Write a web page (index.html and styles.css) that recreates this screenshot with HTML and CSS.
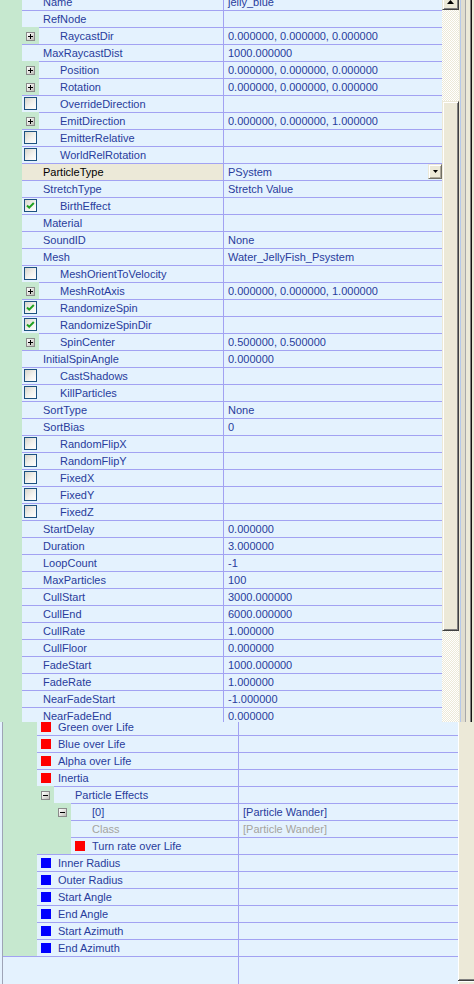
FILE: index.html
```html
<!DOCTYPE html>
<html>
<head>
<meta charset="utf-8">
<link rel="stylesheet" href="styles.css">
</head>
<body>
<div class="top">
  <div class="tlist">
    <div class="trows">
      <div class="row"><div class="gut"></div><div class="cnt"><div class="lab">Name</div><div class="val">jelly_blue</div></div></div>
      <div class="row"><div class="gut"></div><div class="cnt"><div class="lab">RefNode</div><div class="val"></div></div></div>
      <div class="row"><div class="gut gx"><span class="pm plus"></span></div><div class="cnt"><div class="lab nar">RaycastDir</div><div class="val">0.000000, 0.000000, 0.000000</div></div></div>
      <div class="row"><div class="gut"></div><div class="cnt"><div class="lab">MaxRaycastDist</div><div class="val">1000.000000</div></div></div>
      <div class="row"><div class="gut gx"><span class="pm plus"></span></div><div class="cnt"><div class="lab nar">Position</div><div class="val">0.000000, 0.000000, 0.000000</div></div></div>
      <div class="row"><div class="gut gx"><span class="pm plus"></span></div><div class="cnt"><div class="lab nar">Rotation</div><div class="val">0.000000, 0.000000, 0.000000</div></div></div>
      <div class="row"><div class="gut"></div><div class="cnt"><div class="lab cb"><span class="cbx"></span>OverrideDirection</div><div class="val"></div></div></div>
      <div class="row"><div class="gut gx"><span class="pm plus"></span></div><div class="cnt"><div class="lab nar">EmitDirection</div><div class="val">0.000000, 0.000000, 1.000000</div></div></div>
      <div class="row"><div class="gut"></div><div class="cnt"><div class="lab cb"><span class="cbx"></span>EmitterRelative</div><div class="val"></div></div></div>
      <div class="row"><div class="gut"></div><div class="cnt"><div class="lab cb"><span class="cbx"></span>WorldRelRotation</div><div class="val"></div></div></div>
      <div class="row sel"><div class="gut"></div><div class="cnt"><div class="lab">ParticleType</div><div class="val">PSystem<span class="dd"><svg width="5" height="3" viewBox="0 0 5 3"><path d="M0 0h5L2.5 3z" fill="#000"/></svg></span></div></div></div>
      <div class="row"><div class="gut"></div><div class="cnt"><div class="lab">StretchType</div><div class="val">Stretch Value</div></div></div>
      <div class="row"><div class="gut"></div><div class="cnt"><div class="lab cb"><span class="cbx"><svg width="11" height="11" viewBox="0 0 11 11"><path d="M2 5.5l2.2 2.2L8.8 3" fill="none" stroke="#21a121" stroke-width="2"/></svg></span>BirthEffect</div><div class="val"></div></div></div>
      <div class="row"><div class="gut"></div><div class="cnt"><div class="lab">Material</div><div class="val"></div></div></div>
      <div class="row"><div class="gut"></div><div class="cnt"><div class="lab">SoundID</div><div class="val">None</div></div></div>
      <div class="row"><div class="gut"></div><div class="cnt"><div class="lab">Mesh</div><div class="val">Water_JellyFish_Psystem</div></div></div>
      <div class="row"><div class="gut"></div><div class="cnt"><div class="lab cb"><span class="cbx"></span>MeshOrientToVelocity</div><div class="val"></div></div></div>
      <div class="row"><div class="gut gx"><span class="pm plus"></span></div><div class="cnt"><div class="lab nar">MeshRotAxis</div><div class="val">0.000000, 0.000000, 1.000000</div></div></div>
      <div class="row"><div class="gut"></div><div class="cnt"><div class="lab cb"><span class="cbx"><svg width="11" height="11" viewBox="0 0 11 11"><path d="M2 5.5l2.2 2.2L8.8 3" fill="none" stroke="#21a121" stroke-width="2"/></svg></span>RandomizeSpin</div><div class="val"></div></div></div>
      <div class="row"><div class="gut"></div><div class="cnt"><div class="lab cb"><span class="cbx"><svg width="11" height="11" viewBox="0 0 11 11"><path d="M2 5.5l2.2 2.2L8.8 3" fill="none" stroke="#21a121" stroke-width="2"/></svg></span>RandomizeSpinDir</div><div class="val"></div></div></div>
      <div class="row"><div class="gut gx"><span class="pm plus"></span></div><div class="cnt"><div class="lab nar">SpinCenter</div><div class="val">0.500000, 0.500000</div></div></div>
      <div class="row"><div class="gut"></div><div class="cnt"><div class="lab">InitialSpinAngle</div><div class="val">0.000000</div></div></div>
      <div class="row"><div class="gut"></div><div class="cnt"><div class="lab cb"><span class="cbx"></span>CastShadows</div><div class="val"></div></div></div>
      <div class="row"><div class="gut"></div><div class="cnt"><div class="lab cb"><span class="cbx"></span>KillParticles</div><div class="val"></div></div></div>
      <div class="row"><div class="gut"></div><div class="cnt"><div class="lab">SortType</div><div class="val">None</div></div></div>
      <div class="row"><div class="gut"></div><div class="cnt"><div class="lab">SortBias</div><div class="val">0</div></div></div>
      <div class="row"><div class="gut"></div><div class="cnt"><div class="lab cb"><span class="cbx"></span>RandomFlipX</div><div class="val"></div></div></div>
      <div class="row"><div class="gut"></div><div class="cnt"><div class="lab cb"><span class="cbx"></span>RandomFlipY</div><div class="val"></div></div></div>
      <div class="row"><div class="gut"></div><div class="cnt"><div class="lab cb"><span class="cbx"></span>FixedX</div><div class="val"></div></div></div>
      <div class="row"><div class="gut"></div><div class="cnt"><div class="lab cb"><span class="cbx"></span>FixedY</div><div class="val"></div></div></div>
      <div class="row"><div class="gut"></div><div class="cnt"><div class="lab cb"><span class="cbx"></span>FixedZ</div><div class="val"></div></div></div>
      <div class="row"><div class="gut"></div><div class="cnt"><div class="lab">StartDelay</div><div class="val">0.000000</div></div></div>
      <div class="row"><div class="gut"></div><div class="cnt"><div class="lab">Duration</div><div class="val">3.000000</div></div></div>
      <div class="row"><div class="gut"></div><div class="cnt"><div class="lab">LoopCount</div><div class="val">-1</div></div></div>
      <div class="row"><div class="gut"></div><div class="cnt"><div class="lab">MaxParticles</div><div class="val">100</div></div></div>
      <div class="row"><div class="gut"></div><div class="cnt"><div class="lab">CullStart</div><div class="val">3000.000000</div></div></div>
      <div class="row"><div class="gut"></div><div class="cnt"><div class="lab">CullEnd</div><div class="val">6000.000000</div></div></div>
      <div class="row"><div class="gut"></div><div class="cnt"><div class="lab">CullRate</div><div class="val">1.000000</div></div></div>
      <div class="row"><div class="gut"></div><div class="cnt"><div class="lab">CullFloor</div><div class="val">0.000000</div></div></div>
      <div class="row"><div class="gut"></div><div class="cnt"><div class="lab">FadeStart</div><div class="val">1000.000000</div></div></div>
      <div class="row"><div class="gut"></div><div class="cnt"><div class="lab">FadeRate</div><div class="val">1.000000</div></div></div>
      <div class="row"><div class="gut"></div><div class="cnt"><div class="lab">NearFadeStart</div><div class="val">-1.000000</div></div></div>
      <div class="row"><div class="gut"></div><div class="cnt"><div class="lab">NearFadeEnd</div><div class="val">0.000000</div></div></div>
    </div>
  </div>
  <div class="tscroll">
    <div class="sbtn"><svg width="7" height="4" viewBox="0 0 7 4"><path d="M3.5 0L7 4H0z" fill="#000"/></svg></div>
    <div class="track t1"></div>
    <div class="thumb"></div>
    <div class="track t2"></div>
  </div>
  <div class="frame"></div>
</div>
<div class="bottom">
  <div class="bedge"></div>
  <div class="blist">
    <div class="brows">
      <div class="row"><div class="bgut l1"></div><div class="cnt"><div class="lab"><span class="sq red"></span>Green over Life</div><div class="val"></div></div></div>
      <div class="row"><div class="bgut l1"></div><div class="cnt"><div class="lab"><span class="sq red"></span>Blue over Life</div><div class="val"></div></div></div>
      <div class="row"><div class="bgut l1"></div><div class="cnt"><div class="lab"><span class="sq red"></span>Alpha over Life</div><div class="val"></div></div></div>
      <div class="row"><div class="bgut l1"></div><div class="cnt"><div class="lab"><span class="sq red"></span>Inertia</div><div class="val"></div></div></div>
      <div class="row"><div class="bgut l2"><span class="pm"></span></div><div class="cnt"><div class="lab nar txt">Particle Effects</div><div class="val"></div></div></div>
      <div class="row"><div class="bgut l3"><span class="pm"></span></div><div class="cnt"><div class="lab nar3 txt">[0]</div><div class="val">[Particle Wander]</div></div></div>
      <div class="row dim"><div class="bgut l3"></div><div class="cnt"><div class="lab nar3 txt">Class</div><div class="val">[Particle Wander]</div></div></div>
      <div class="row"><div class="bgut l3"></div><div class="cnt"><div class="lab nar3"><span class="sq red"></span>Turn rate over Life</div><div class="val"></div></div></div>
      <div class="row"><div class="bgut l1"></div><div class="cnt"><div class="lab"><span class="sq blue"></span>Inner Radius</div><div class="val"></div></div></div>
      <div class="row"><div class="bgut l1"></div><div class="cnt"><div class="lab"><span class="sq blue"></span>Outer Radius</div><div class="val"></div></div></div>
      <div class="row"><div class="bgut l1"></div><div class="cnt"><div class="lab"><span class="sq blue"></span>Start Angle</div><div class="val"></div></div></div>
      <div class="row"><div class="bgut l1"></div><div class="cnt"><div class="lab"><span class="sq blue"></span>End Angle</div><div class="val"></div></div></div>
      <div class="row"><div class="bgut l1"></div><div class="cnt"><div class="lab"><span class="sq blue"></span>Start Azimuth</div><div class="val"></div></div></div>
      <div class="row"><div class="bgut l1"></div><div class="cnt"><div class="lab"><span class="sq blue"></span>End Azimuth</div><div class="val"></div></div></div>
    </div>
    <div class="bfill"></div>
  </div>
  <div class="bscroll">
    <div class="bthumb"></div>
    <div class="bbtn"></div>
  </div>
</div>
</body>
</html>
```

FILE: styles.css
```css
* { box-sizing: border-box; }
html, body { margin: 0; padding: 0; }
body {
  width: 474px;
  height: 984px;
  overflow: hidden;
  background: #e4f2fe;
  font-family: "Liberation Sans", Arial, sans-serif;
  font-size: 11px;
  color: #283c9c;
}

/* ---------- top property grid ---------- */
.top { display: flex; height: 722px; overflow: hidden; }
.tlist { width: 442px; flex: none; background: #c6e8cf; overflow: hidden; }
.trows { margin-top: -7px; }

.row { display: flex; height: 17px; }
.gut { flex: none; width: 22px; }
.gut.gx { width: 39px; padding: 5px 0 0 26px; }

.cnt {
  flex: 1;
  min-width: 0;
  display: flex;
  border-top: 1px solid #a2a2f2;
  background: #e4f2fe;
}
.lab {
  flex: none;
  width: 202px;
  height: 16px;
  border-right: 1px solid #a2a2f2;
  padding-left: 21px;
  line-height: 16px;
  white-space: nowrap;
  overflow: hidden;
  display: flex;
  align-items: flex-start;
}
.lab.nar { width: 185px; }
.lab.nar3 { width: 168px; }
.lab.cb { padding-left: 2px; }
.val {
  flex: 1;
  min-width: 0;
  height: 16px;
  padding-left: 4px;
  line-height: 16px;
  white-space: nowrap;
  overflow: hidden;
  display: flex;
}

.sel .lab { background: #ece9d8; color: #000; }

.cbx {
  flex: none;
  width: 13px;
  height: 13px;
  margin: 1px 23px 0 0;
  border: 1px solid #1c5180;
  background: linear-gradient(135deg, #d8d6cc 0%, #f2f2ee 55%, #ffffff 100%);
  display: flex;
}

.pm {
  display: block;
  position: relative;
  width: 9px;
  height: 9px;
  border: 1px solid #8a8a8a;
  background: linear-gradient(135deg, #ffffff 0%, #e6e6e2 45%, #bdbdb6 100%);
}
.pm::before {
  content: "";
  position: absolute;
  left: 1px;
  top: 3px;
  width: 5px;
  height: 1px;
  background: #000;
}
.pm.plus::after {
  content: "";
  position: absolute;
  left: 3px;
  top: 1px;
  width: 1px;
  height: 5px;
  background: #000;
}

.dd {
  margin-left: auto;
  flex: none;
  width: 14px;
  height: 15px;
  background: #ece9d8;
  border: 1px solid;
  border-color: #ece9d8 #716f64 #716f64 #ece9d8;
  box-shadow: inset 1px 1px #fff, inset -1px -1px #aca899;
  display: flex;
  align-items: center;
  justify-content: center;
}

/* scrollbar of the top grid */
.tscroll { width: 17px; flex: none; display: flex; flex-direction: column; }
.sbtn, .thumb {
  flex: none;
  background: #ece9d8;
  border: 1px solid;
  border-color: #ece9d8 #404040 #404040 #ece9d8;
  box-shadow: inset 1px 1px #fff, inset -1px -1px #808080;
}
.sbtn {
  height: 17px;
  margin-top: -7px;
  display: flex;
  align-items: center;
  justify-content: center;
}
.track { background: repeating-conic-gradient(#ffffff 0 25%, #ece9d8 0 50%) 0 0 / 2px 2px; }
.t1 { height: 91px; flex: none; }
.thumb { height: 530px; }
.t2 { flex: 1; }

.frame {
  width: 15px;
  flex: none;
  background: linear-gradient(to right,
    #ece9d8 0 1px, #b6c9ea 1px 2px, #e0ddd0 2px 6px, #a8a8a8 6px 7px,
    #ece9d8 7px 11px, #808080 11px 12px, #141414 12px 13px, #ece9d8 13px 15px);
}

/* ---------- bottom tree grid ---------- */
.bottom { display: flex; height: 262px; overflow: hidden; }
.bedge { width: 3px; flex: none; border-right: 1px solid #9ea4b6; }
.blist { width: 455px; flex: none; display: flex; flex-direction: column; }
.brows { margin-top: -4px; border-bottom: 1px solid #a2a2f2; }
.bgut { flex: none; background: #c6e8cf; }
.bgut.l1 { width: 34px; }
.bgut.l2 { width: 51px; padding: 5px 0 0 38px; }
.bgut.l3 { width: 68px; padding: 5px 0 0 55px; }
.brows .lab { padding-left: 0; }
.brows .lab.txt { padding-left: 21px; }
.sq { flex: none; width: 10px; height: 10px; margin: 3px 7px 0 4px; }
.sq.red { background: #ff0000; }
.sq.blue { background: #0000ff; }
.dim .lab, .dim .val { color: #a4a49e; }

.bfill {
  flex: 1;
  background: linear-gradient(to right, transparent 235px, #a2a2f2 235px 236px, transparent 236px);
}

.bscroll { width: 16px; flex: none; display: flex; flex-direction: column; }
.bthumb {
  height: 259px;
  flex: none;
  background: #ece9d8;
  border-bottom: 1px solid #404040;
  box-shadow: inset 1px 0 #fff, inset 0 -1px #808080;
}
.bbtn { flex: 1; background: #ece9d8; box-shadow: inset 1px 1px #fff; }
```
